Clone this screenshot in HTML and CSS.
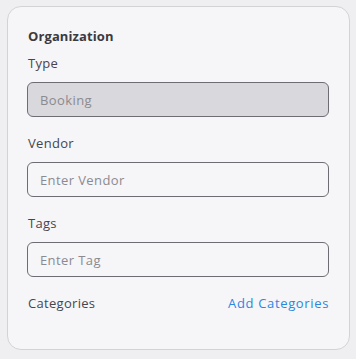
FILE: index.html
```html
<!DOCTYPE html>
<html lang="en">
<head>
    <meta charset="UTF-8">
    <title>Organization</title>
    <link rel="stylesheet" href="styles.css">
</head>
<body>
<div class="card">
    <div class="card-title">Organization</div>

    <div class="field">
        <label class="field-label">Type</label>
        <input class="field-input" type="text" placeholder="Booking" disabled>
    </div>

    <div class="field">
        <label class="field-label">Vendor</label>
        <input class="field-input" type="text" placeholder="Enter Vendor">
    </div>

    <div class="field">
        <label class="field-label">Tags</label>
        <input class="field-input" type="text" placeholder="Enter Tag">
    </div>

    <div class="categories">
        <span class="field-label">Categories</span>
        <a class="add-link" href="javascript:;">Add Categories</a>
    </div>
</div>
</body>
</html>
```

FILE: styles.css
```css
* {
    margin: 0;
    padding: 0;
    box-sizing: border-box;
}

body {
    background-color: #efeef1;
    font-family: "Open Sans", "Liberation Sans", sans-serif;
    padding: 6px 7px;
}

/* card container */
.card {
    width: 343px;
    height: 344px;
    background-color: #f6f5f8;
    border: 1px solid #d3d2d6;
    border-radius: 14px;
    padding: 19px 19px 0 19px;
}

.card-title {
    font-size: 13px;
    font-weight: 700;
    line-height: 20px;
    color: #3b3a40;
    letter-spacing: 0.1px;
    margin-bottom: 7px;
    padding-left: 1px;
}

.field {
    display: flex;
    flex-direction: column;
    margin-bottom: 16px;
}

.field-label {
    font-size: 13px;
    line-height: 20px;
    color: #47464c;
    letter-spacing: 0.3px;
    padding-left: 1px;
}

.field .field-label {
    margin-bottom: 9px;
}

.field-input {
    height: 35px;
    width: 302px;
    border: 1px solid #6e6d73;
    border-radius: 6px;
    background-color: #f6f5f8;
    padding: 0 12px;
    font-family: inherit;
    font-size: 13px;
    letter-spacing: 0.4px;
    color: #47464c;
    outline: none;
}

.field-input::placeholder {
    color: #8b8a90;
}

.field-input:disabled {
    background-color: #d9d8dc;
}

.categories {
    display: flex;
    justify-content: space-between;
    align-items: center;
    width: 302px;
}

.add-link {
    font-size: 13px;
    line-height: 20px;
    color: #2b87e0;
    text-decoration: none;
    letter-spacing: 0.65px;
}
```
